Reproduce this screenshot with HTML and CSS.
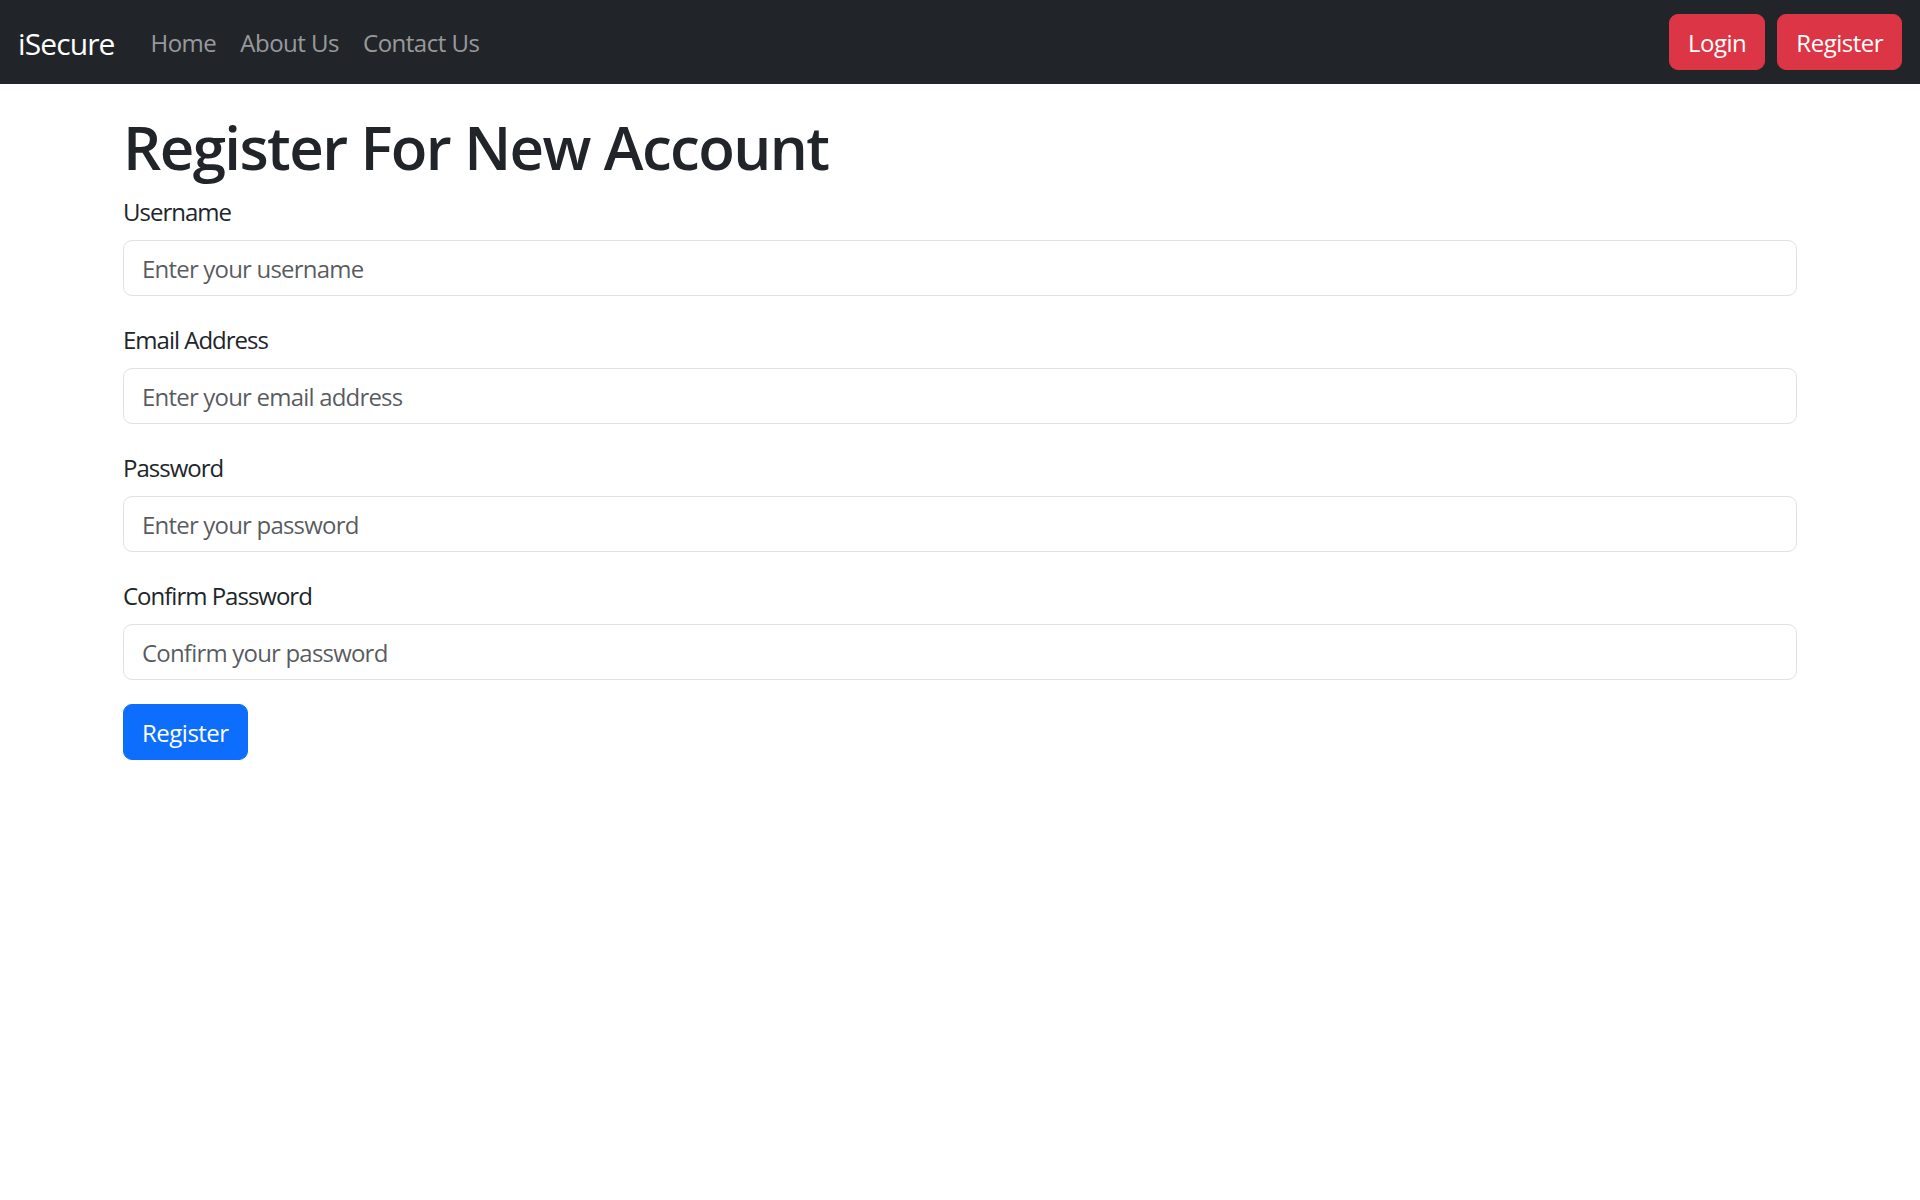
FILE: index.html
```html
<!DOCTYPE html>
<html lang="en">
<head>
<meta charset="utf-8">
<title>iSecure - Register</title>
<link rel="stylesheet" href="styles.css">
</head>
<body>
<nav class="navbar">
  <div class="navbar-inner">
    <a class="brand" href="#">iSecure</a>
    <ul class="nav-links">
      <li><a class="nav-link" href="#">Home</a></li>
      <li><a class="nav-link" href="#">About Us</a></li>
      <li><a class="nav-link" href="#">Contact Us</a></li>
    </ul>
    <div class="nav-actions">
      <a class="btn btn-danger" href="#">Login</a>
      <a class="btn btn-danger" href="#">Register</a>
    </div>
  </div>
</nav>
<main class="container">
  <h1 class="title">Register For New Account</h1>
  <form class="form">
    <div class="field">
      <label class="form-label" for="username">Username</label>
      <input class="form-control" id="username" type="text" placeholder="Enter your username">
    </div>
    <div class="field">
      <label class="form-label" for="email">Email Address</label>
      <input class="form-control" id="email" type="email" placeholder="Enter your email address">
    </div>
    <div class="field">
      <label class="form-label" for="password">Password</label>
      <input class="form-control" id="password" type="password" placeholder="Enter your password">
    </div>
    <div class="field">
      <label class="form-label" for="confirm">Confirm Password</label>
      <input class="form-control" id="confirm" type="password" placeholder="Confirm your password">
    </div>
    <button class="btn btn-primary" type="submit">Register</button>
  </form>
</main>
</body>
</html>
```
FILE: styles.css
```css
* { box-sizing: border-box; }
html, body { margin: 0; padding: 0; }
body {
  font-family: "Open Sans", "Noto Sans", "Liberation Sans", sans-serif;
  font-size: 24px;
  line-height: 36px;
  color: #212529;
  background: #fff;
}
a { text-decoration: none; }

.navbar {
  background: #212529;
  padding: 12px 0;
}
.navbar-inner {
  display: flex;
  align-items: center;
  padding: 0 18px;
}
.brand {
  color: #fff;
  font-size: 30px;
  line-height: 45px;
  padding: 9px 0 6px;
  margin-right: 24px;
  letter-spacing: -0.9px;
}
.nav-links {
  list-style: none;
  display: flex;
  margin: 0;
  padding: 0;
  flex: 1;
}
.nav-link {
  display: block;
  color: rgba(255,255,255,0.55);
  padding: 13px 12px 11px;
  letter-spacing: -0.5px;
}
.nav-actions {
  display: flex;
  gap: 12px;
}

.btn {
  display: inline-block;
  font-family: inherit;
  font-size: 24px;
  line-height: 36px;
  padding: 10px 18px 8px;
  border: 1.5px solid transparent;
  border-radius: 9px;
  color: #fff;
  cursor: pointer;
  letter-spacing: -0.5px;
}
.btn-danger { background: #dc3545; border-color: #dc3545; }
.btn-primary { background: #0d6efd; border-color: #0d6efd; }

.container {
  width: 1674px;
  margin: 24px auto 0;
}
.title {
  font-size: 60px;
  line-height: 72px;
  font-weight: 600;
  margin: 0 0 9px;
  padding-top: 3px;
  letter-spacing: -1.6px;
}
.form { margin: 0; }
.field { margin-bottom: 24px; }
.form-label {
  display: block;
  padding-top: 2px;
  margin-bottom: 10px;
  letter-spacing: -1px;
}
.form-control {
  display: block;
  width: 100%;
  font-family: inherit;
  font-size: 24px;
  line-height: 36px;
  padding: 10px 18px 8px;
  color: #212529;
  background: #fff;
  border: 1.5px solid #dee2e6;
  border-radius: 9px;
  letter-spacing: -0.8px;
}
.form-control::placeholder {
  color: rgba(33,37,41,0.75);
  opacity: 1;
}
```
